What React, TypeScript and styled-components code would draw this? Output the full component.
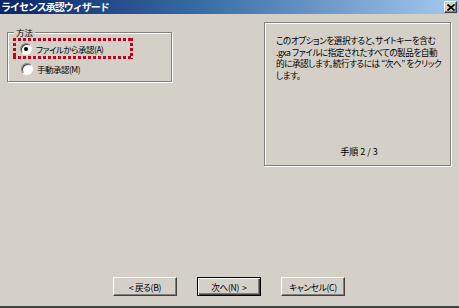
import React from "react";
import styled, { createGlobalStyle } from "styled-components";

const Global = createGlobalStyle`
  html, body { margin: 0; padding: 0; background: #d4d0c8; }
  body { font-family: "Noto Sans CJK JP", "Liberation Sans", sans-serif; }
  * { box-sizing: border-box; }
`;

const jp = `"Noto Sans CJK JP", "Liberation Sans", sans-serif`;

const Window = styled.div`
  width: 459px;
  height: 308px;
  background: #d4d0c8;
  display: flex;
  flex-direction: column;
  border-bottom: 2px solid #404040;
`;

const TitleBar = styled.div`
  height: 14px;
  flex: none;
  display: flex;
  align-items: center;
  justify-content: space-between;
  padding: 0 2px 0 1px;
  background: linear-gradient(90deg, #0a246a 0%, #3a6ea5 45%, #a6caf0 100%);
`;

const Title = styled.span`
  color: #fff;
  font-family: ${jp};
  font-weight: 700;
  font-size: 10px;
  letter-spacing: -1px;
  line-height: 14px;
  white-space: nowrap;
`;

const CloseButton = styled.div`
  width: 13px;
  height: 12px;
  background: #d4d0c8;
  border: 1px solid;
  border-color: #fff #404040 #404040 #fff;
  box-shadow: inset -1px -1px 0 #808080;
  display: flex;
  align-items: center;
  justify-content: center;
`;

const Body = styled.div`
  flex: 1;
  display: flex;
  align-items: flex-start;
  padding: 8px 0 0 7px;
`;

const GroupBox = styled.div`
  position: relative;
  width: 165px;
  margin-top: 10px;
  padding: 5px 5px 2px 5px;
  border: 1px solid #808080;
  box-shadow: 1px 1px 0 #fff, inset 1px 1px 0 #fff;
`;

const Legend = styled.span`
  position: absolute;
  top: -7px;
  left: 6px;
  padding: 0 2px;
  background: #d4d0c8;
  font-family: ${jp};
  font-size: 8.5px;
  line-height: 12px;
  color: #000;
`;

const dot = "#c4001c";

const Highlight = styled.div`
  width: 120px;
  height: 21px;
  display: flex;
  align-items: center;
  gap: 4px;
  padding-left: 7px;
  background:
    repeating-linear-gradient(90deg, ${dot} 0 3px, transparent 3px 5px) top left / 100% 3px no-repeat,
    repeating-linear-gradient(90deg, ${dot} 0 3px, transparent 3px 5px) bottom left / 100% 3px no-repeat,
    repeating-linear-gradient(180deg, ${dot} 0 3px, transparent 3px 5px) top left / 3px 100% no-repeat,
    repeating-linear-gradient(180deg, ${dot} 0 3px, transparent 3px 5px) top right / 3px 100% no-repeat;
`;

const OptionRow = styled.div`
  height: 20px;
  display: flex;
  align-items: center;
  gap: 4px;
  padding-left: 8px;
`;

const Radio = styled.span<{ $checked?: boolean }>`
  position: relative;
  width: 12px;
  height: 12px;
  flex: none;
  border-radius: 50%;
  background: #fff;
  border: 1px solid;
  border-color: #808080 #fff #fff #808080;
  box-shadow: inset 1px 1px 0 #404040;
  &::after {
    content: "";
    display: ${(p) => (p.$checked ? "block" : "none")};
    position: absolute;
    left: 3px;
    top: 3px;
    width: 4px;
    height: 4px;
    border-radius: 50%;
    background: #000;
  }
`;

const Label = styled.span`
  font-family: ${jp};
  font-size: 8.5px;
  letter-spacing: -0.5px;
  line-height: 12px;
  color: #000;
  white-space: nowrap;
  font-feature-settings: "palt";
`;

const InfoPanel = styled.div`
  margin-left: 92px;
  width: 187px;
  height: 144px;
  border: 1px solid #808080;
  box-shadow: 1px 1px 0 #fff, inset 1px 1px 0 #fff;
  display: flex;
  flex-direction: column;
  justify-content: space-between;
  padding: 12px 4px 7px 11px;
`;

const InfoText = styled.div`
  font-family: ${jp};
  font-size: 8.6px;
  letter-spacing: -0.45px;
  line-height: 11.5px;
  color: #000;
  white-space: nowrap;
  font-feature-settings: "palt";
`;

const Step = styled.div`
  text-align: center;
  font-family: ${jp};
  font-size: 9px;
  line-height: 12px;
  color: #000;
  padding-right: 4px;
`;

const Footer = styled.div`
  flex: none;
  height: 29px;
  display: flex;
  justify-content: center;
  gap: 20px;
  padding-right: 1px;
`;

const Button = styled.div<{ $default?: boolean }>`
  width: 64px;
  height: 19px;
  display: flex;
  align-items: center;
  justify-content: center;
  font-family: ${jp};
  font-size: 8.6px;
  letter-spacing: -0.3px;
  color: #000;
  white-space: nowrap;
  background: #d4d0c8;
  font-feature-settings: "palt";
  border: 1px solid;
  border-color: ${(p) => (p.$default ? "#000" : "#fff #404040 #404040 #fff")};
  box-shadow: ${(p) =>
    p.$default
      ? "inset 1px 1px 0 #fff, inset -1px -1px 0 #404040, inset -2px -2px 0 #808080"
      : "inset -1px -1px 0 #808080"};
`;

export default function App() {
  return (
    <>
      <Global />
      <Window>
        <TitleBar>
          <Title>ライセンス承認ウィザード</Title>
          <CloseButton>
            <svg width="8" height="7" viewBox="0 0 8 7">
              <path d="M0.5 0.5 L7.5 6.5 M7.5 0.5 L0.5 6.5" stroke="#000" strokeWidth="1.6" />
            </svg>
          </CloseButton>
        </TitleBar>
        <Body>
          <GroupBox>
            <Legend>方法</Legend>
            <Highlight>
              <Radio $checked />
              <Label>ファイルから承認(A)</Label>
            </Highlight>
            <OptionRow>
              <Radio />
              <Label>手動承認(M)</Label>
            </OptionRow>
          </GroupBox>
          <InfoPanel>
            <InfoText>
              このオプションを選択すると、サイトキーを含む
              <br />
              .gxa ファイルに指定されたすべての製品を自動
              <br />
              的に承認します。続行するには “次へ” をクリック
              <br />
              します。
            </InfoText>
            <Step>手順 2 / 3</Step>
          </InfoPanel>
        </Body>
        <Footer>
          <Button>&lt; 戻る(B)</Button>
          <Button $default>次へ(N)&nbsp;&nbsp;&gt;</Button>
          <Button>キャンセル(C)</Button>
        </Footer>
      </Window>
    </>
  );
}
